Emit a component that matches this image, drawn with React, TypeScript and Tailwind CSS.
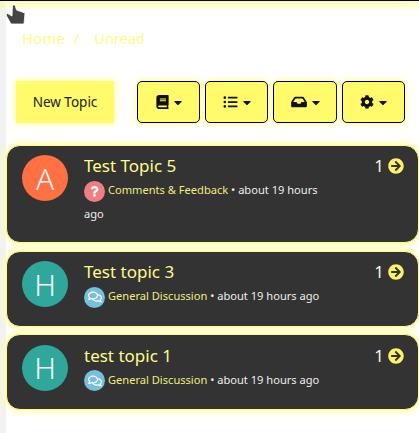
import { FaArrowCircleRight, FaBook, FaCaretDown, FaCog, FaInbox, FaListUl, FaQuestion, FaRegComments } from 'react-icons/fa';
import type { ReactNode } from 'react';

type Topic = {
  title: string;
  letter: string;
  avatar: string;
  height: string;
  category: string;
  badge: string;
  icon: ReactNode;
};

const topics: Topic[] = [
  {
    title: 'Test Topic 5',
    letter: 'A',
    avatar: 'bg-[#ff7043]',
    height: 'h-[98.5px]',
    category: 'Comments & Feedback',
    badge: 'bg-[#ef7f85]',
    icon: <FaQuestion className="h-[11px] w-[11px] text-white" />,
  },
  {
    title: 'Test topic 3',
    letter: 'H',
    avatar: 'bg-[#30a79c]',
    height: 'h-[76px]',
    category: 'General Discussion',
    badge: 'bg-[#74c0de]',
    icon: <FaRegComments className="h-[14px] w-[14px] text-white" />,
  },
  {
    title: 'test topic 1',
    letter: 'H',
    avatar: 'bg-[#30a79c]',
    height: 'h-[76px]',
    category: 'General Discussion',
    badge: 'bg-[#74c0de]',
    icon: <FaRegComments className="h-[14px] w-[14px] text-white" />,
  },
];

function ToolButton({ icon, width }: { icon: ReactNode; width: string }) {
  return (
    <button className={`flex h-[42px] ${width} items-center justify-center gap-[5px] rounded-[5px] border border-black bg-[#fffb6b] text-[#111] shadow-[0_0_6px_1px_#fffb9a]`}>
      {icon}
      <FaCaretDown className="h-[13px] w-[8px]" />
    </button>
  );
}

export default function App() {
  return (
    <div className="relative h-[433px] w-[419px] overflow-hidden bg-white font-['Noto_Sans',sans-serif]">
      <div className="absolute inset-y-0 left-0 w-[6px] bg-[#f2f2f2]" />
      <div className="relative z-10 h-px bg-black" />
      <div className="absolute inset-x-0 top-0 h-px shadow-[0_0_8px_4px_#fffb9a]" />
      <svg className="absolute left-0 top-0 z-10 h-[30px] w-[40px]" viewBox="0 0 40 30">
        <path
          d="M12.5 5 L15 5 L16.5 10 L25 13 L24 24 L11 24 L6 15 L7.5 13.5 L12 16 Z"
          fill="#444"
          stroke="#fff"
          strokeWidth="0.8"
          strokeLinejoin="round"
        />
      </svg>

      <div className="relative flex h-[80px] items-start gap-[9px] pl-[22px] pt-[27px] text-[15px] leading-[20px] text-[#fffb8a]">
        <span>Home</span>
        <span>/</span>
        <span className="ml-[6px] text-[14.5px]">Unread</span>
      </div>

      <div className="relative flex items-center pl-[16px]">
        <button className="mr-[23px] h-[42px] w-[98px] bg-[#fffb6b] text-[13.5px] text-[#222] shadow-[0_0_6px_1px_#fffb9a]">New Topic</button>
        <div className="flex gap-[5px]">
          <ToolButton width="w-[63px]" icon={<FaBook className="h-[14px] w-[13px]" />} />
          <ToolButton width="w-[63px]" icon={<FaListUl className="h-[14px] w-[15px]" />} />
          <ToolButton width="w-[64px]" icon={<FaInbox className="h-[14px] w-[16px]" />} />
          <ToolButton width="w-[63px]" icon={<FaCog className="h-[14px] w-[14px]" />} />
        </div>
      </div>

      <div className="relative ml-[6px] mt-[21.5px] flex flex-col gap-[7.5px]">
        {topics.map(t => (
          <div
            key={t.title}
            className={`flex ${t.height} rounded-[14px] border border-[#fffb8a] bg-[#333] pl-[15px] pr-[14px] pt-[9.5px] shadow-[0_0_6px_2px_#ffffa6]`}
          >
            <div className={`flex h-[46px] w-[46px] shrink-0 items-center justify-center rounded-full ${t.avatar} text-[30px] font-light text-[#f5f5f5]`}>{t.letter}</div>
            <div className="ml-[16px] -mt-px min-w-0 flex-1">
              <div className="flex items-center justify-between">
                <span className="text-[17px] leading-[24px] text-[#fffb8a]">{t.title}</span>
                <span className="flex items-center gap-[4px] text-[17px] leading-[24px] text-[#f2f2f2]">
                  1
                  <FaArrowCircleRight className="h-[16px] w-[16px] text-[#fff06b]" />
                </span>
              </div>
              <div className="w-[246px] text-[11.1px] leading-[24px] text-[#eeeeee]">
                <span className={`mr-[3px] inline-flex h-[21px] w-[21px] items-center justify-center rounded-full align-middle ${t.badge}`}>{t.icon}</span>
                <span className="text-[#f0ec80]">{t.category}</span>
                {' • about 19 hours ago'}
              </div>
            </div>
          </div>
        ))}
      </div>
    </div>
  );
}
